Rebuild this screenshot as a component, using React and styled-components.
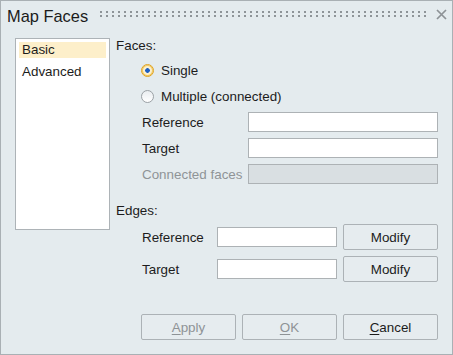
import React from 'react'
import styled, { createGlobalStyle } from 'styled-components'

const GlobalStyle = createGlobalStyle`
  html, body {
    margin: 0;
    padding: 0;
    background: #e4ebee;
  }
  body {
    font-family: "Liberation Sans", Arial, sans-serif;
    font-size: 13.4px;
    color: #1c1c1c;
  }
  * {
    box-sizing: border-box;
  }
`

const App = () => {
  return (
    <>
      <GlobalStyle />
      <Dialog>
        <TitleBar>
          <Title>Map Faces</Title>
          <Grip />
          <Close>
            <svg width="11" height="11" viewBox="0 0 11 11">
              <path d="M1 1 L10 10 M10 1 L1 10" stroke="#8d9296" strokeWidth="1.7" />
            </svg>
          </Close>
        </TitleBar>

        <Main>
          <List>
            <ListItem $selected>Basic</ListItem>
            <ListItem>Advanced</ListItem>
          </List>

          <Panel>
            <Heading>Faces:</Heading>
            <RadioGroup>
              <RadioRow>
                <Radio $checked />
                Single
              </RadioRow>
              <RadioRow>
                <Radio />
                Multiple (connected)
              </RadioRow>
            </RadioGroup>

            <FieldGrid>
              <Label>Reference</Label>
              <Input />
              <Label>Target</Label>
              <Input />
              <Label $disabled>Connected faces</Label>
              <Input $disabled />
            </FieldGrid>

            <Heading $gap>Edges:</Heading>
            <EdgeGrid>
              <Label>Reference</Label>
              <Input />
              <Button>Modify</Button>
              <Label>Target</Label>
              <Input />
              <Button>Modify</Button>
            </EdgeGrid>
          </Panel>
        </Main>

        <Footer>
          <Button $disabled><u>A</u>pply</Button>
          <Button $disabled><u>O</u>K</Button>
          <Button><u>C</u>ancel</Button>
        </Footer>
      </Dialog>
    </>
  )
}

export default App

const Dialog = styled.div`
  width: 453px;
  height: 355px;
  border: 1px solid #a9b0b4;
  background: #e4ebee;
  display: flex;
  flex-direction: column;
`
const TitleBar = styled.div`
  display: flex;
  align-items: flex-start;
  height: 20px;
  margin-top: 5px;
  padding: 0 5px 0 6px;
`
const Title = styled.div`
  font-size: 16.4px;
  line-height: 20px;
  color: #1b1b1b;
`
const Grip = styled.div`
  flex: 1;
  height: 6px;
  margin: 5px 10px 0 12px;
  background:
    linear-gradient(90deg, transparent 2px, #e4ebee 2px) 0 0 / 6px 4px,
    linear-gradient(#8e9498 2px, transparent 2px) 0 0 / 6px 4px;
`
const Close = styled.div`
  width: 11px;
  height: 11px;
  margin-top: 3px;
  display: flex;
`
const Main = styled.div`
  display: grid;
  grid-template-columns: 95px 1fr;
  column-gap: 6px;
  padding: 0 14px;
  margin-top: 12px;
`
const List = styled.div`
  height: 192px;
  border: 1px solid #adb3b7;
  background: #fff;
  padding: 3px 3px;
`
const ListItem = styled.div`
  height: 16px;
  line-height: 16px;
  padding-left: 3px;
  margin-bottom: 6px;
  background: ${p => (p.$selected ? '#fdefca' : 'transparent')};
`
const Panel = styled.div`
  display: flex;
  flex-direction: column;
`
const Heading = styled.div`
  height: 16px;
  line-height: 16px;
  margin-top: ${p => (p.$gap ? '19px' : '0')};
`
const RadioGroup = styled.div`
  margin-top: 3px;
  display: flex;
  flex-direction: column;
`
const RadioRow = styled.div`
  height: 26px;
  display: flex;
  align-items: center;
  gap: 7px;
  padding-left: 25px;
`
const Radio = styled.span`
  width: 13px;
  height: 13px;
  border-radius: 50%;
  flex: none;
  border: 1px solid ${p => (p.$checked ? '#dfa224' : '#9ba1a5')};
  box-shadow: ${p => (p.$checked ? 'inset 0 0 0 1px #f1c75a' : 'none')};
  background: ${p =>
    p.$checked
      ? 'radial-gradient(circle, #1d5fc4 0 2px, #fbf0cf 2.6px)'
      : 'linear-gradient(#e9edf0, #ffffff)'};
`
const FieldGrid = styled.div`
  margin-top: 3px;
  padding-left: 26px;
  display: grid;
  grid-template-columns: 106px 190px;
  grid-auto-rows: 20px;
  row-gap: 6px;
  align-items: center;
`
const Label = styled.div`
  white-space: nowrap;
  color: ${p => (p.$disabled ? '#8f9497' : '#1c1c1c')};
`
const Input = styled.div`
  height: 20px;
  border: 1px solid #adb2b5;
  background: ${p => (p.$disabled ? '#d9dfe2' : '#fff')};
`
const EdgeGrid = styled.div`
  margin-top: 5px;
  padding-left: 26px;
  display: grid;
  grid-template-columns: 75px 120px 95px;
  grid-auto-rows: 26px;
  column-gap: 0;
  row-gap: 6px;
  align-items: center;

  & > :nth-child(3n) {
    margin-left: 6px;
  }
`
const Button = styled.div`
  width: 95px;
  height: 26px;
  border: 1px solid #acb2b6;
  border-radius: 2px;
  background: #e6ecef;
  display: flex;
  align-items: center;
  justify-content: center;
  color: ${p => (p.$disabled ? '#8e9396' : '#1c1c1c')};

  u {
    text-decoration-thickness: 1px;
    text-underline-offset: 2px;
  }
`
const Footer = styled.div`
  margin-top: auto;
  display: flex;
  justify-content: flex-end;
  gap: 6px;
  padding: 0 14px 14px;
`
